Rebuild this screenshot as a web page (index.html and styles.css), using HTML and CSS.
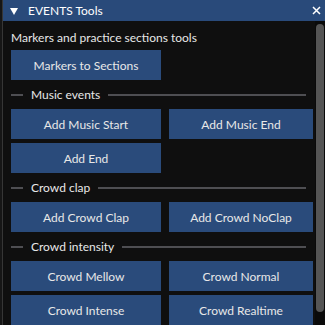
FILE: index.html
```html
<!DOCTYPE html>
<html>
<head>
    <title>EVENTS Tools</title>
    <meta name="viewport" content="width=device-width, initial-scale=1.0">
    <link rel="stylesheet" href="styles.css">
</head>
<body>
    <div class="window">
        <div class="titlebar">
            <svg class="collapse" width="8" height="7" viewBox="0 0 8 7"><polygon points="0,0 8,0 4,7" fill="#ffffff"/></svg>
            <span class="title">EVENTS Tools</span>
            <svg class="close" width="9" height="9" viewBox="0 0 9 9"><path d="M1 1 L8 8 M8 1 L1 8" stroke="#ffffff" stroke-width="1.5"/></svg>
        </div>
        <div class="window-body">
            <div class="content">
                <div class="label">Markers and practice sections tools</div>
                <div class="row">
                    <button class="btn">Markers to Sections</button>
                </div>
                <div class="separator"><span>Music events</span></div>
                <div class="row">
                    <button class="btn">Add Music Start</button>
                    <button class="btn">Add Music End</button>
                </div>
                <div class="row">
                    <button class="btn">Add End</button>
                </div>
                <div class="separator"><span>Crowd clap</span></div>
                <div class="row">
                    <button class="btn">Add Crowd Clap</button>
                    <button class="btn">Add Crowd NoClap</button>
                </div>
                <div class="separator"><span>Crowd intensity</span></div>
                <div class="row">
                    <button class="btn">Crowd Mellow</button>
                    <button class="btn">Crowd Normal</button>
                </div>
                <div class="row">
                    <button class="btn">Crowd Intense</button>
                    <button class="btn">Crowd Realtime</button>
                </div>
            </div>
            <div class="scrollbar"><div class="thumb"></div></div>
        </div>
    </div>
</body>
</html>
```

FILE: styles.css
```css
:root {
    --window-bg: #0f0f0f;
    --title-bg: #294a7a;
    --button-bg: #2a4b7b;
    --text-color: #e8e8e8;
    --separator: #4e4e52;
    --scroll-thumb: #555555;
}

body, html {
    margin: 0;
    padding: 0;
    width: 325px;
    height: 325px;
    overflow: hidden;
    background-color: #161616;
    font-family: "Lato", "Noto Sans", sans-serif;
    font-size: 12px;
    color: var(--text-color);
}

.window {
    margin-left: 2px;
    height: 325px;
    display: flex;
    flex-direction: column;
    border-left: 1px solid #363636;
    background-color: var(--window-bg);
}

.titlebar {
    flex: 0 0 21px;
    display: flex;
    align-items: center;
    background-color: var(--title-bg);
    padding-left: 7px;
}

.collapse {
    margin-top: 1px;
}

.title {
    margin-left: 10px;
    flex: 1;
    color: #ffffff;
    font-size: 12px;
}

.close {
    margin-right: 4px;
}

.window-body {
    flex: 1;
    display: flex;
    min-height: 0;
}

.content {
    flex: 1;
    display: flex;
    flex-direction: column;
    gap: 4px;
    padding: 9px 2px 0 8px;
}

.label {
    line-height: 16px;
}

.row {
    display: grid;
    grid-template-columns: 150px 1fr;
    gap: 8px;
}

.btn {
    height: 30px;
    border: none;
    padding: 0;
    background-color: var(--button-bg);
    color: var(--text-color);
    font-family: inherit;
    font-size: 12px;
}

.separator {
    height: 23px;
    display: flex;
    align-items: center;
    margin-right: 7px;
}

.separator::before {
    content: "";
    width: 12px;
    height: 2px;
    background-color: var(--separator);
}

.separator::after {
    content: "";
    flex: 1;
    height: 2px;
    background-color: var(--separator);
}

.separator span {
    padding: 0 8px;
}

.scrollbar {
    flex: 0 0 10px;
    padding: 3px 1px 13px 1px;
    box-sizing: border-box;
    background-color: #0a0a0a;
}

.thumb {
    height: 100%;
    border-radius: 4px;
    background-color: var(--scroll-thumb);
}
```
